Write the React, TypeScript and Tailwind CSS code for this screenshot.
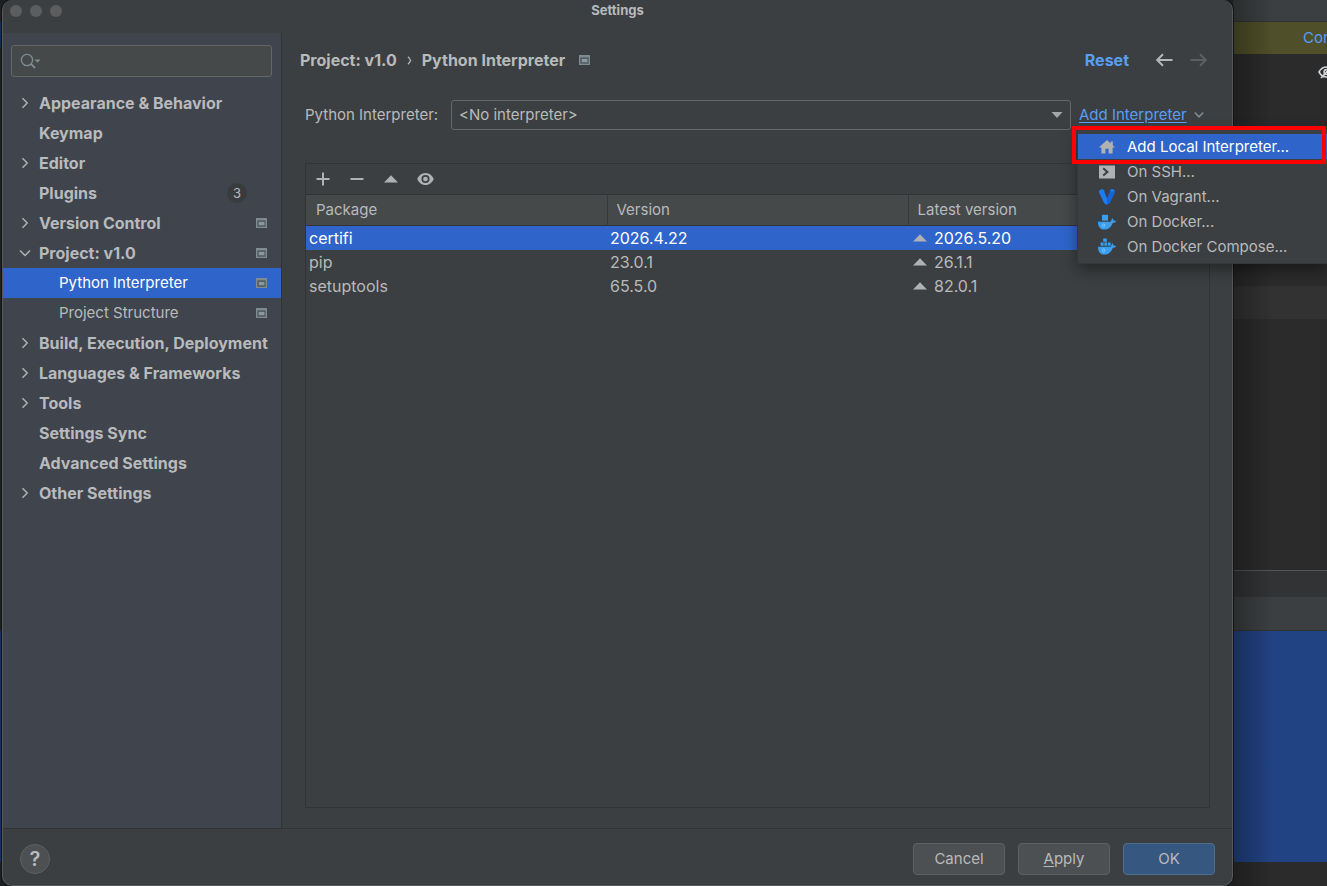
import { useState } from "react";
import type { ReactNode } from "react";

interface TreeItem {
  label: string;
  expanded?: boolean;
  child?: boolean;
  badge?: string;
  projectLevel?: boolean;
}

interface PackageRow {
  name: string;
  version: string;
  latest: string;
}

const TREE: TreeItem[] = [
  { label: "Appearance & Behavior", expanded: false },
  { label: "Keymap" },
  { label: "Editor", expanded: false },
  { label: "Plugins", badge: "3" },
  { label: "Version Control", expanded: false, projectLevel: true },
  { label: "Project: v1.0", expanded: true, projectLevel: true },
  { label: "Python Interpreter", child: true, projectLevel: true },
  { label: "Project Structure", child: true, projectLevel: true },
  { label: "Build, Execution, Deployment", expanded: false },
  { label: "Languages & Frameworks", expanded: false },
  { label: "Tools", expanded: false },
  { label: "Settings Sync" },
  { label: "Advanced Settings" },
  { label: "Other Settings", expanded: false },
];

const PACKAGES: PackageRow[] = [
  { name: "certifi", version: "2026.4.22", latest: "2026.5.20" },
  { name: "pip", version: "23.0.1", latest: "26.1.1" },
  { name: "setuptools", version: "65.5.0", latest: "82.0.1" },
];

const MENU: { label: string; icon: ReactNode }[] = [
  { label: "Add Local Interpreter...", icon: <HomeIcon /> },
  { label: "On SSH...", icon: <SshIcon /> },
  { label: "On Vagrant...", icon: <VagrantIcon /> },
  { label: "On Docker...", icon: <DockerIcon /> },
  { label: "On Docker Compose...", icon: <DockerIcon compose /> },
];

function HomeIcon() {
  return (
    <svg width="18" height="18" viewBox="0 0 18 18" fill="#afb1b3">
      <path d="M9 2 0.8 9.6H3.4V15.5H7.4V10.8H10.6V15.5H14.6V9.6H17.2L14.8 7.4V3.4H12.6V5.4Z" />
    </svg>
  );
}

function SshIcon() {
  return (
    <svg width="18" height="18" viewBox="0 0 18 18">
      <path d="M1 2.5H17V15.5H1Z" fill="#afb1b3" />
      <path d="M5.2 5.2 9.4 8.9 5.2 12.4" fill="none" stroke="#3c3f41" strokeWidth="2" />
    </svg>
  );
}

function VagrantIcon() {
  return (
    <svg width="18" height="18" viewBox="0 0 18 18">
      <path d="M1 2.4 4 1 6.4 2.2V4L9 10.5V16.8L6.2 15.3 1 4.2Z" fill="#1b7cf5" />
      <path d="M17 2.4 14 1 11.6 2.2V4L9 10.5V16.8L11.8 15.3 17 4.2Z" fill="#1563d8" />
      <path d="M11.6 2.4 14 1 17 2.4 14.4 3.8Z" fill="#1b7cf5" />
    </svg>
  );
}

function DockerIcon({ compose = false }: { compose?: boolean }) {
  return (
    <svg width="20" height="18" viewBox="0 0 20 18">
      {compose ? (
        <path d="M6.2 0.5H9.8V3.7H6.2ZM3.6 4.6H6.6V7.8H3.6ZM7.4 4.6H10V7.8H7.4ZM10.8 4.6H13.6V7.8H10.8Z" fill="#3a9ff0" />
      ) : (
        <path d="M5 1.8H11V7.6H5Z" fill="#3a9ff0" />
      )}
      <path
        d="M1 8.7H13.8C14.4 8.3 14.3 6.4 15.2 5.3 16.2 5.9 16.5 6.9 16.4 7.6 17.4 7.3 18.4 7.6 19 8.2 18.5 9.2 17.3 9.8 15.8 9.8 14.4 13.6 12 16.6 7.6 16.6 3.2 16.6 1 13.8 1 8.7Z"
        fill="#3a9ff0"
      />
      <ellipse cx="6.6" cy="12.4" rx="1.1" ry="1.6" fill="none" stroke="#a5d3f8" strokeWidth="0.7" />
    </svg>
  );
}

function ProjectLevelIcon() {
  return (
    <svg width="11" height="11" viewBox="0 0 11 11" className="shrink-0">
      <path d="M0 0H11V10H0Z" fill="#7f8b91" />
      <path d="M1.4 2.4H9.6V8.7H1.4Z" fill="#4b5459" />
      <path d="M2.7 3.8H8.5V7.3H2.7Z" fill="#8c989f" />
    </svg>
  );
}

function Chevron({ expanded }: { expanded: boolean }) {
  return (
    <svg width="12" height="12" viewBox="0 0 12 12" fill="none" stroke="#afb1b3" strokeWidth="1.5">
      {expanded ? <path d="M1 3.5 6 8.5 11 3.5" /> : <path d="M3.5 1.2 8.2 6 3.5 10.8" />}
    </svg>
  );
}

function UpTriangle() {
  return (
    <svg width="14" height="8" viewBox="0 0 14 8" className="shrink-0">
      <path d="M0 7.5 7 0.3 14 7.5Z" fill="#afb1b3" />
    </svg>
  );
}

function Sidebar() {
  const [selected, setSelected] = useState("Python Interpreter");

  return (
    <aside className="w-[279px] shrink-0 border-r border-[#323334] bg-[#40444d] pt-3">
      <div className="mr-[9px] ml-2 flex h-8 items-center rounded-[3px] border border-[#646667] bg-[#45494a] pl-2">
        <svg width="22" height="18" viewBox="0 0 22 18" fill="none" className="shrink-0">
          <circle cx="7" cy="8" r="5.6" stroke="#7f8b91" strokeWidth="1.4" />
          <path d="M11 12 15 16" stroke="#7f8b91" strokeWidth="1.8" />
          <path d="M14.5 7.5H20.5L17.5 10.8Z" fill="#7f8b91" />
        </svg>
        <input type="search" aria-label="Search settings" className="min-w-0 flex-1 bg-transparent text-[#bbbbbb] outline-none" />
      </div>
      <ul className="mt-[11px]">
        {TREE.map((item) => (
          <li key={item.label}>
            <button
              type="button"
              onClick={() => setSelected(item.label)}
              className={`flex h-[30px] w-full items-center pr-[14px] pl-4 text-left ${
                item.label === selected ? "bg-[#2f65ca] text-white" : "text-[#b8babc]"
              }`}
            >
              <span className="w-5 shrink-0">
                {item.expanded !== undefined && <Chevron expanded={item.expanded} />}
              </span>
              <span className={`flex-1 whitespace-nowrap ${item.child ? "pl-5 text-[15px]" : "font-bold"}`}>
                {item.label}
              </span>
              {item.badge && (
                <span className="mr-5 flex size-5 items-center justify-center rounded-full bg-[#393c3e] text-[13px]">
                  {item.badge}
                </span>
              )}
              {item.projectLevel && <ProjectLevelIcon />}
            </button>
          </li>
        ))}
      </ul>
    </aside>
  );
}

function AddInterpreterMenu() {
  const [active, setActive] = useState(0);

  return (
    <div className="absolute top-full -left-0.5 z-20 mt-1 w-[252px] border border-[#35383a] bg-[#3c3f41] pt-1 pb-1 shadow-[0_6px_14px_rgba(0,0,0,0.4)]">
      <ul role="menu">
        {MENU.map((item, i) => (
          <li key={item.label} role="none">
            <button
              type="button"
              role="menuitem"
              onMouseEnter={() => setActive(i)}
              className={`flex h-[25px] w-full items-center text-[15px] whitespace-nowrap ${
                i === active ? "bg-[#2f65ca] text-white" : "text-[#b8babc]"
              }`}
            >
              <span className="ml-[19px] flex w-[30px] shrink-0 items-center justify-start">
                <span className="flex w-5 justify-center">{item.icon}</span>
              </span>
              {item.label}
            </button>
          </li>
        ))}
      </ul>
      <div className="pointer-events-none absolute -top-1 -left-1.5 h-[38px] w-[254px] border-4 border-[#ff0000]" />
    </div>
  );
}

function PackagesPanel() {
  const [selected, setSelected] = useState("certifi");

  return (
    <div className="mt-[33px] ml-[5px] flex-1 border border-[#323334]">
      <div className="flex h-[30px] items-center gap-[18px] pl-[9px]">
        <button type="button" aria-label="Install">
          <svg width="16" height="16" viewBox="0 0 16 16" stroke="#afb1b3" strokeWidth="2">
            <path d="M8 1.5V14.5M1.5 8H14.5" />
          </svg>
        </button>
        <button type="button" aria-label="Uninstall">
          <svg width="16" height="16" viewBox="0 0 16 16" stroke="#afb1b3" strokeWidth="2">
            <path d="M1.5 8H14.5" />
          </svg>
        </button>
        <button type="button" aria-label="Upgrade" className="flex w-4 justify-center">
          <UpTriangle />
        </button>
        <button type="button" aria-label="Show early releases">
          <svg width="17" height="16" viewBox="0 0 18 16">
            <path
              d="M9 1.6C4.8 1.6 1.6 4.6 0.3 8 1.6 11.4 4.8 14.4 9 14.4S16.4 11.4 17.7 8C16.4 4.6 13.2 1.6 9 1.6ZM9 12.3A4.3 4.3 0 1 1 9 3.7 4.3 4.3 0 0 1 9 12.3Z"
              fill="#afb1b3"
              fillRule="evenodd"
            />
            <circle cx="9" cy="8" r="2.5" fill="#afb1b3" />
          </svg>
        </button>
      </div>
      <table className="w-full table-fixed border-collapse text-left">
        <thead>
          <tr className="h-[31px] border-y border-[#323334] bg-[#45494a] text-[15px]">
            <th className="border-r border-[#36393b] pl-[10px] font-normal">Package</th>
            <th className="border-r border-[#36393b] pl-[9px] font-normal">Version</th>
            <th className="pl-[9px] font-normal">Latest version</th>
          </tr>
        </thead>
        <tbody>
          {PACKAGES.map((p) => (
            <tr
              key={p.name}
              onClick={() => setSelected(p.name)}
              className={`h-6 leading-6 ${p.name === selected ? "bg-[#2f65ca] text-white" : ""}`}
            >
              <td className="pl-[3px]">{p.name}</td>
              <td className="pl-[3px]">{p.version}</td>
              <td className="pl-[5px]">
                <span className="flex items-center gap-[7px]">
                  <UpTriangle />
                  {p.latest}
                </span>
              </td>
            </tr>
          ))}
        </tbody>
      </table>
    </div>
  );
}

function InterpreterPage() {
  return (
    <main className="flex min-w-0 flex-1 flex-col pt-3 pr-[22px] pb-5 pl-[18px]">
      <div className="flex h-[30px] shrink-0 items-center font-bold">
        <span>Project: v1.0</span>
        <svg width="5" height="9" viewBox="0 0 5 9" fill="none" stroke="#b0b2b4" strokeWidth="1.3" className="mx-[10px]">
          <path d="M1 0.8C2.2 2 3.2 3.2 3.6 4.5 3.2 5.8 2.2 7 1 8.2" />
        </svg>
        <span className="mr-[14px]">Python Interpreter</span>
        <ProjectLevelIcon />
        <button type="button" className="ml-auto text-[#589df6]">
          Reset
        </button>
        <button type="button" aria-label="Back" className="ml-[26px]">
          <svg width="18" height="14" viewBox="0 0 18 14" fill="none" stroke="#b4b6b8" strokeWidth="2">
            <path d="M17.5 7H2.5M8 1.3 2.2 7 8 12.7" />
          </svg>
        </button>
        <button type="button" aria-label="Forward" className="mr-[2px] ml-[17px]" disabled>
          <svg width="18" height="14" viewBox="0 0 18 14" fill="none" stroke="#5d6062" strokeWidth="2">
            <path d="M0.5 7H15.5M10 1.3 15.8 7 10 12.7" />
          </svg>
        </button>
      </div>

      <div className="mt-[25px] ml-[5px] flex h-[30px] shrink-0 items-center text-[15px]">
        <label htmlFor="interpreter" className="w-[146px] shrink-0 whitespace-nowrap">
          Python Interpreter:
        </label>
        <div className="relative h-full min-w-0 flex-1">
          <select
            id="interpreter"
            className="h-full w-full appearance-none rounded-[3px] border border-[#646667] bg-[#3c3f41] pl-[7px] outline-none"
          >
            <option>&lt;No interpreter&gt;</option>
          </select>
          <svg width="12" height="6" viewBox="0 0 12 6" className="pointer-events-none absolute top-3 right-2">
            <path d="M0.5 0H11.5L6 6Z" fill="#a4a6a8" />
          </svg>
        </div>
        <div className="relative ml-2 flex w-[131px] items-center">
          <button type="button" aria-haspopup="menu" className="flex items-center gap-[7px] whitespace-nowrap text-[#589df6]">
            <span className="underline underline-offset-2">Add Interpreter</span>
            <svg width="10" height="8" viewBox="0 0 10 8" fill="none" stroke="#7f8b91" strokeWidth="1.6">
              <path d="M0.8 1.5 5 5.8 9.2 1.5" />
            </svg>
          </button>
          <AddInterpreterMenu />
        </div>
      </div>

      <PackagesPanel />
    </main>
  );
}

function Footer() {
  return (
    <footer className="flex h-[57px] shrink-0 items-center border-t border-[#323334] px-[17px] pt-1 text-[15px]">
      <button
        type="button"
        aria-label="Help"
        className="flex size-[30px] items-center justify-center rounded-full border border-[#5e6162] bg-[#4c5052] text-xl font-semibold"
      >
        ?
      </button>
      <div className="ml-auto flex gap-[13px]">
        <button type="button" className="h-8 w-[92px] rounded-[4px] border border-[#5e6162] bg-[#4c5052]">
          Cancel
        </button>
        <button type="button" className="h-8 w-[92px] rounded-[4px] border border-[#5e6162] bg-[#4c5052]">
          <span className="underline underline-offset-2">A</span>pply
        </button>
        <button type="button" className="h-8 w-[92px] rounded-[4px] border border-[#4c708c] bg-[#365880]">
          OK
        </button>
      </div>
    </footer>
  );
}

/* Editor window showing behind the dialog */
function EditorEdge() {
  return (
    <div className="relative flex w-[94px] shrink-0 flex-col overflow-hidden bg-[#2b2b2b]">
      <div className="h-[22px] shrink-0 border-b border-[#323334] bg-[#3c3f41]" />
      <div className="flex h-8 shrink-0 items-center bg-[#4f4f29] pl-[70px] text-[15px] text-[#589df6]">Configure</div>
      <div className="h-[232px] shrink-0 pt-[11px] pl-[85px]">
        <svg width="17" height="14" viewBox="0 0 17 14" fill="none" stroke="#d0d2d4" strokeWidth="1.6">
          <path d="M1 7C3 3.4 5.5 2 8.5 2S14 3.4 16 7C14 10.6 11.5 12 8.5 12S3 10.6 1 7ZM3 13 14 1" />
          <circle cx="8.5" cy="7" r="2.4" />
        </svg>
      </div>
      <div className="h-[33px] shrink-0 bg-[#323232]" />
      <div className="min-h-0 flex-1" />
      <div className="h-[27px] shrink-0 border-t border-[#555555] bg-[#313335]" />
      <div className="h-[34px] shrink-0 border-b border-[#323334] bg-[#3c3f41]" />
      <div className="h-[231px] shrink-0 bg-[#214283]" />
      <div className="h-6 shrink-0" />
      <div className="absolute inset-y-0 left-0 w-10 bg-linear-to-r from-black/30 to-transparent" />
    </div>
  );
}

export default function App() {
  return (
    <div className="flex h-screen overflow-hidden bg-[#1e1f20] font-[Inter,'Liberation_Sans',sans-serif] text-base leading-5 text-[#b8babc]">
      <div className="flex w-0.5 shrink-0 flex-col justify-between pt-[22px] pb-6">
        <div className="h-[25px] bg-[#0e2f55]" />
        <div className="h-[231px] bg-[#16305f]" />
      </div>
      <div className="relative z-10 flex min-w-0 flex-1 flex-col rounded-[10px] border border-t-0 border-[#55585a] bg-[#3c3f41] shadow-[0_0_0_1px_#151515]">
        <header className="relative flex h-[33px] shrink-0 items-start justify-center">
          <div className="absolute top-[5px] left-[7px] flex gap-2">
            <span className="size-3 rounded-full bg-[#5c5d5e]" />
            <span className="size-3 rounded-full bg-[#5c5d5e]" />
            <span className="size-3 rounded-full bg-[#5c5d5e]" />
          </div>
          <h1 className="text-[13px] font-bold">Settings</h1>
        </header>
        <div className="flex min-h-0 flex-1">
          <Sidebar />
          <InterpreterPage />
        </div>
        <Footer />
      </div>
      <EditorEdge />
    </div>
  );
}
